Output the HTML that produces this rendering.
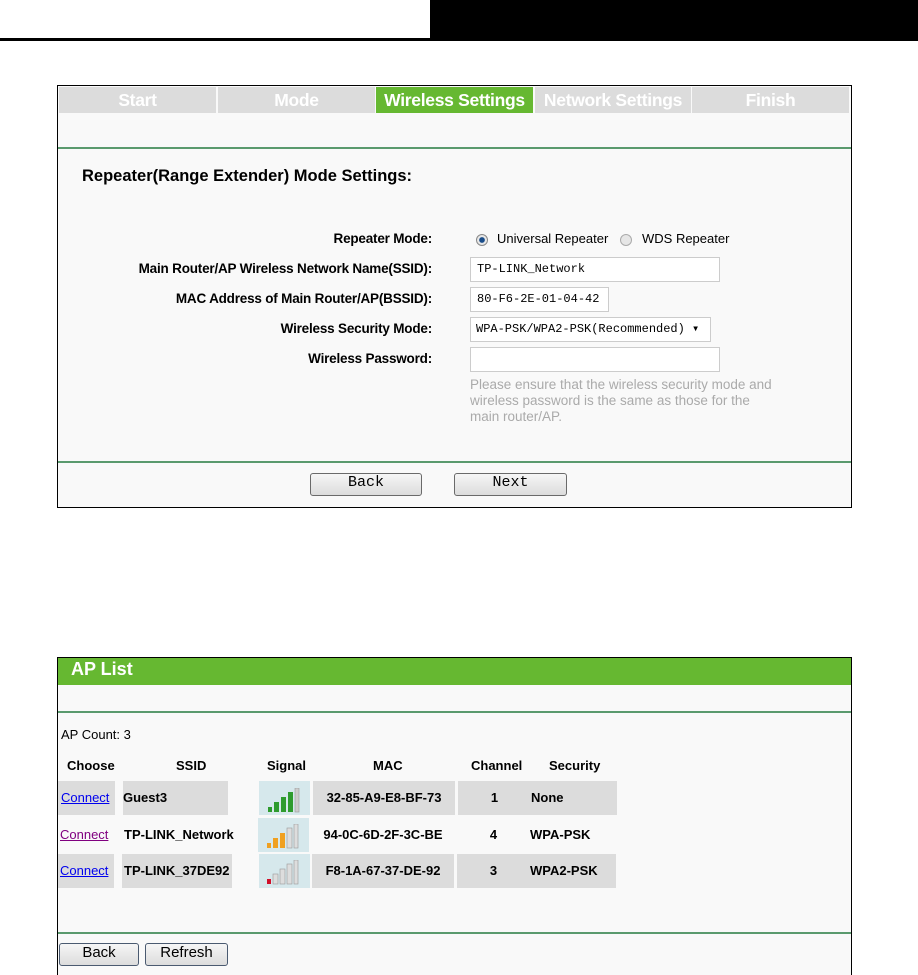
<!DOCTYPE html>
<html><head><meta charset="utf-8"><style>
body{margin:0;width:918px;height:975px;background:#fff;position:relative;font-family:"Liberation Sans",Arial,sans-serif;overflow:hidden}
.a{position:absolute}
.lbl{position:absolute;right:486px;font-size:13.5px;font-weight:bold;color:#000;letter-spacing:-0.2px}
.inp{position:absolute;border:1px solid #ccc;background:#fff;font-family:"Liberation Mono",monospace;font-size:12px;padding-left:6px;box-sizing:border-box;line-height:23px}
.btn{position:absolute;border:1px solid #6a6a6a;border-radius:3px;background:linear-gradient(#f6f6f6,#dcdcdc);box-sizing:border-box;text-align:center;font-size:14px}
.tab{position:absolute;top:87px;height:26px;background:#dcdcdc;color:#fff;font-weight:bold;font-size:17.5px;text-align:center;line-height:26px;letter-spacing:-0.3px}
.c{position:absolute;background:#dcdcdc;font-size:13px;font-weight:bold;line-height:34px;height:34px}
.h{position:absolute;top:758px;font-size:13px;font-weight:bold}
a{color:#00e;text-decoration:underline;font-weight:normal}
</style></head><body>
<div class="a" style="left:430px;top:0;width:488px;height:41px;background:#000"></div>
<div class="a" style="left:0;top:38px;width:430px;height:3px;background:#000"></div>

<div class="a" style="left:57px;top:85px;width:793px;height:421px;border:1px solid #000;background:#f9f9f9"></div>
<div class="tab" style="left:59px;width:157px">Start</div>
<div class="tab" style="left:218px;width:157px">Mode</div>
<div class="tab" style="left:376px;width:157px;background:#66b831">Wireless Settings</div>
<div class="tab" style="left:535px;width:156px">Network Settings</div>
<div class="tab" style="left:692px;width:157px">Finish</div>
<div class="a" style="left:58px;top:147px;width:793px;height:2px;background:#5a9a6e"></div>
<div class="a" style="left:82px;top:167px;font-size:16.5px;font-weight:bold">Repeater(Range Extender) Mode Settings:</div>

<div class="lbl" style="top:231px">Repeater Mode:</div>
<div class="lbl" style="top:261px">Main Router/AP Wireless Network Name(SSID):</div>
<div class="lbl" style="top:291px">MAC Address of Main Router/AP(BSSID):</div>
<div class="lbl" style="top:321px">Wireless Security Mode:</div>
<div class="lbl" style="top:351px">Wireless Password:</div>

<div class="a" style="left:476px;top:234px;width:10px;height:10px;border-radius:50%;border:1px solid #888;background:radial-gradient(#1a4d8a 35%,#e8e8e8 45%)"></div>
<div class="a" style="left:497px;top:231px;font-size:13px">Universal Repeater</div>
<div class="a" style="left:620px;top:234px;width:10px;height:10px;border-radius:50%;border:1px solid #aaa;background:#e6e6e6"></div>
<div class="a" style="left:642px;top:231px;font-size:13px">WDS Repeater</div>

<div class="inp" style="left:470px;top:257px;width:250px;height:25px">TP-LINK_Network</div>
<div class="inp" style="left:470px;top:287px;width:139px;height:25px">80-F6-2E-01-04-42</div>
<div class="inp" style="left:470px;top:317px;width:241px;height:25px;padding-left:5px">WPA-PSK/WPA2-PSK(Recommended) ▾</div>
<div class="inp" style="left:470px;top:347px;width:250px;height:25px"></div>
<div class="a" style="left:470px;top:377px;font-size:13.5px;color:#aaa;line-height:16px;width:310px">Please ensure that the wireless security mode and wireless password is the same as those for the main router/AP.</div>

<div class="a" style="left:58px;top:461px;width:793px;height:2px;background:#5a9a6e"></div>
<div class="btn" style="left:310px;top:473px;width:112px;height:23px;font-family:'Liberation Mono',monospace;font-size:15px">Back</div>
<div class="btn" style="left:454px;top:473px;width:113px;height:23px;font-family:'Liberation Mono',monospace;font-size:15px">Next</div>

<div class="a" style="left:57px;top:657px;width:793px;height:317px;border:1px solid #000;border-bottom:none;background:#f9f9f9"></div>
<div class="a" style="left:58px;top:658px;width:793px;height:27px;background:#66b831"></div>
<div class="a" style="left:71px;top:659px;font-size:18px;font-weight:bold;color:#fff">AP List</div>
<div class="a" style="left:58px;top:711px;width:793px;height:2px;background:#5a9a6e"></div>
<div class="a" style="left:61px;top:727px;font-size:13px">AP Count: 3</div>
<div class="h" style="left:67px">Choose</div>
<div class="h" style="left:176px">SSID</div>
<div class="h" style="left:267px">Signal</div>
<div class="h" style="left:373px">MAC</div>
<div class="h" style="left:471px">Channel</div>
<div class="h" style="left:549px">Security</div>

<div class="c" style="left:58px;top:781px;width:54px;padding-left:3px"><a>Connect</a></div>
<div class="c" style="left:123px;top:781px;width:105px">Guest3</div>
<div class="c" style="left:259px;top:781px;width:51px;background:#d6e8ec"></div>
<div class="c" style="left:313px;top:781px;width:142px;text-align:center">32-85-A9-E8-BF-73</div>
<div class="c" style="left:458px;top:781px;width:73px;text-align:center">1</div>
<div class="c" style="left:531px;top:781px;width:86px">None</div>

<div class="c" style="left:58px;top:818px;width:54px;padding-left:2px;background:none"><a style="color:#800080">Connect</a></div>
<div class="c" style="left:124px;top:818px;background:none">TP-LINK_Network</div>
<div class="c" style="left:258px;top:818px;width:51px;background:#d6e8ec"></div>
<div class="c" style="left:312px;top:818px;width:142px;text-align:center;background:none">94-0C-6D-2F-3C-BE</div>
<div class="c" style="left:457px;top:818px;width:73px;text-align:center;background:none">4</div>
<div class="c" style="left:530px;top:818px;background:none">WPA-PSK</div>

<div class="c" style="left:58px;top:854px;width:54px;padding-left:2px"><a>Connect</a></div>
<div class="c" style="left:122px;top:854px;width:108px;padding-left:2px">TP-LINK_37DE92</div>
<div class="c" style="left:259px;top:854px;width:51px;background:#d6e8ec"></div>
<div class="c" style="left:312px;top:854px;width:142px;text-align:center">F8-1A-67-37-DE-92</div>
<div class="c" style="left:457px;top:854px;width:73px;text-align:center">3</div>
<div class="c" style="left:530px;top:854px;width:86px">WPA2-PSK</div>

<svg class="a" style="left:267px;top:788px" width="40" height="26">
<rect x="1" y="19" width="4" height="5" fill="#2e9b2e"/><rect x="7" y="14" width="5" height="10" fill="#2e9b2e"/><rect x="14" y="9" width="5" height="15" fill="#2e9b2e"/><rect x="21" y="4" width="5" height="20" fill="#2e9b2e"/><rect x="28" y="0" width="4" height="24" fill="#ccc" stroke="#999" stroke-width=".6"/></svg>
<svg class="a" style="left:266px;top:824px" width="40" height="26">
<rect x="1" y="19" width="4" height="5" fill="#f0a020"/><rect x="7" y="14" width="5" height="10" fill="#f0a020"/><rect x="14" y="9" width="5" height="15" fill="#f0a020"/><rect x="21" y="4" width="5" height="20" fill="#ddd" stroke="#999" stroke-width=".6"/><rect x="28" y="0" width="4" height="24" fill="#ddd" stroke="#999" stroke-width=".6"/></svg>
<svg class="a" style="left:266px;top:860px" width="40" height="26">
<rect x="1" y="19" width="4" height="5" fill="#d0102a"/><rect x="7" y="14" width="5" height="10" fill="#ddd" stroke="#999" stroke-width=".6"/><rect x="14" y="9" width="5" height="15" fill="#ddd" stroke="#999" stroke-width=".6"/><rect x="21" y="4" width="5" height="20" fill="#ddd" stroke="#999" stroke-width=".6"/><rect x="28" y="0" width="4" height="24" fill="#ddd" stroke="#999" stroke-width=".6"/></svg>

<div class="a" style="left:58px;top:932px;width:793px;height:2px;background:#5a9a6e"></div>
<div class="btn" style="left:59px;top:943px;width:80px;height:23px;border-color:#4a5a70;font-size:15px">Back</div>
<div class="btn" style="left:145px;top:943px;width:83px;height:23px;border-color:#4a5a70;font-size:15px">Refresh</div>
</body></html>
